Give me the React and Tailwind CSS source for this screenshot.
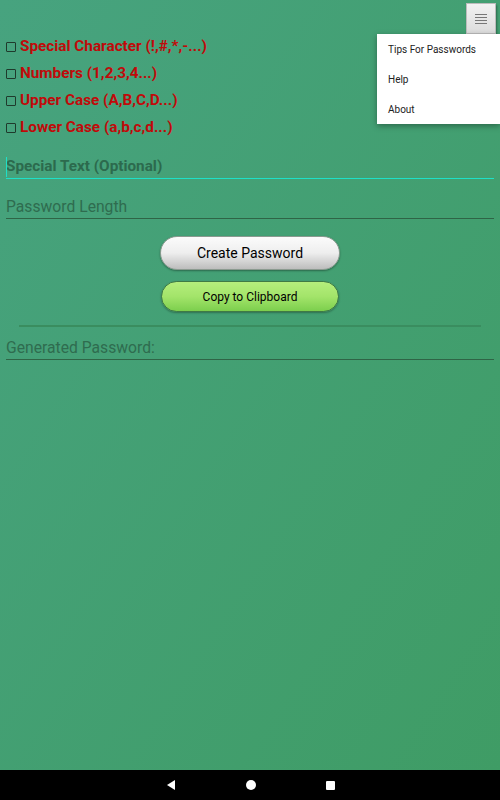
import React, { useState } from 'react';

const options = [
  'Special Character (!,#,*,-...)',
  'Numbers (1,2,3,4...)',
  'Upper Case (A,B,C,D...)',
  'Lower Case (a,b,c,d...)',
];

export default function App() {
  const [checked, setChecked] = useState([false, false, false, false]);

  return (
    <div className="w-[500px] h-[800px] flex flex-col font-['Roboto',sans-serif] overflow-hidden">
      <div className="relative flex-1 bg-gradient-to-br from-[#47a37f] to-[#3f9c65]">
        {/* checkboxes */}
        <div className="pt-[37px] pl-[6px] flex flex-col gap-[8px]">
          {options.map((o, i) => (
            <label key={o} className="flex items-center h-[19px] cursor-pointer" onClick={() => setChecked((p) => p.map((v, j) => (j === i ? !v : v)))}>
              <span className="w-[10px] h-[10px] border-[1.5px] border-[#1f3a2c] rounded-[1px] mr-[4px] flex items-center justify-center text-[8px] leading-none">
                {checked[i] ? '✓' : ''}
              </span>
              <span className="text-[15.3px] font-bold text-[#c00a0a] leading-none">{o}</span>
            </label>
          ))}
        </div>

        {/* special text */}
        <div className="mx-[6px] mt-[16px] relative border-b border-[#1ee0c8] h-[26px] flex items-end">
          <span className="absolute left-0 top-[4px] w-[1px] h-[20px] bg-[#1ee0c8]" />
          <span className="text-[15.3px] font-bold text-[#2c6a4d] pb-[4px] leading-none">Special Text (Optional)</span>
        </div>

        {/* password length */}
        <div className="mx-[6px] mt-[14px] border-b border-[#2f6446] h-[26px] flex items-end">
          <span className="text-[15.7px] text-[#2f6c4f] pb-[3px] leading-none">Password Length</span>
        </div>

        {/* buttons */}
        <div className="flex flex-col items-center mt-[17px] gap-[11px]">
          <button className="w-[180px] h-[34px] rounded-full bg-gradient-to-b from-[#fbfbfb] via-[#eeeeee] to-[#bdbdbd] border border-[#8b9a90] shadow-[0_1px_2px_rgba(0,0,0,0.35)] text-[14px] text-black">
            Create Password
          </button>
          <button className="w-[178px] h-[31px] rounded-full bg-gradient-to-b from-[#b5ee7c] via-[#a3e46a] to-[#7ccf4d] border border-[#3f7a45] shadow-[0_1px_2px_rgba(0,0,0,0.3)] text-[12px] text-black">
            Copy to Clipboard
          </button>
        </div>

        <div className="mx-[19px] mt-[13px] h-[2px] bg-[#3a8d5f]" />

        {/* generated */}
        <div className="mx-[6px] mt-[9px] border-b border-[#2f6446] h-[24px] flex items-end">
          <span className="text-[15.7px] text-[#2f6c4f] pb-[3px] leading-none">Generated Password:</span>
        </div>

        {/* menu button */}
        <div className="absolute top-[3px] right-[4px] w-[30px] h-[31px] bg-gradient-to-b from-[#f2f2f2] to-[#dcdcdc] border border-[#bcbcbc] shadow-[1px_2px_2px_rgba(0,0,0,0.35)] flex flex-col items-center justify-center gap-[2px]">
          <span className="w-[12px] h-[1px] bg-[#777]" />
          <span className="w-[12px] h-[1px] bg-[#777]" />
          <span className="w-[12px] h-[1px] bg-[#777]" />
          <span className="w-[12px] h-[1px] bg-[#777]" />
        </div>

        {/* dropdown */}
        <div className="absolute top-[34px] left-[377px] w-[123px] h-[90px] bg-white shadow-[0_2px_6px_rgba(0,0,0,0.35)] flex flex-col">
          {['Tips For Passwords', 'Help', 'About'].map((t) => (
            <div key={t} className="h-[30px] flex items-center pl-[11px] text-[10px] text-[#222]">
              {t}
            </div>
          ))}
        </div>
      </div>

      {/* nav bar */}
      <div className="h-[30px] bg-black flex items-center justify-center gap-[70px]">
        <svg width="10" height="10" viewBox="0 0 10 10"><polygon points="9,0 9,10 1,5" fill="#fff" /></svg>
        <span className="w-[10px] h-[10px] rounded-full bg-white" />
        <span className="w-[9px] h-[9px] bg-white rounded-[1px]" />
      </div>
    </div>
  );
}
